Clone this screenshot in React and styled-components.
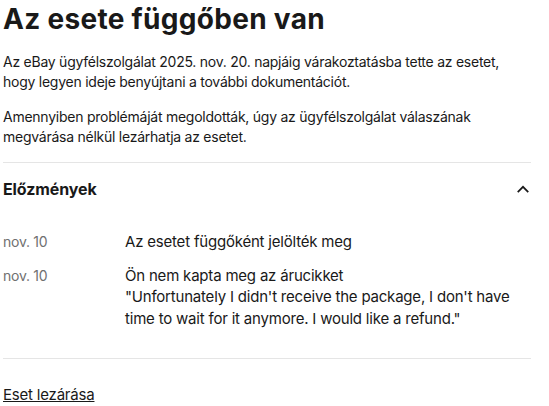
import React from "react";
import styled, { createGlobalStyle } from "styled-components";

const Global = createGlobalStyle`
  html, body { margin: 0; padding: 0; background: #fff; }
  body { font-family: Inter, "Liberation Sans", Arial, sans-serif; color: #191919; }
`;

const Page = styled.div`
  width: 528px;
  padding: 0 0 0 3px;
  box-sizing: content-box;
`;

const Title = styled.h1`
  margin: 0;
  padding-top: 2px;
  font-size: 28px;
  line-height: 34px;
  font-weight: 700;
  letter-spacing: 0.3px;
  color: #191919;
`;

const Para = styled.p`
  margin: ${(p) => p.$top}px 0 0;
  font-size: 14px;
  line-height: 20px;
  letter-spacing: -0.25px;
`;

const Divider = styled.hr`
  margin: ${(p) => p.$top}px 0 0;
  border: 0;
  border-top: 1px solid #e5e5e5;
  height: 0;
`;

const Header = styled.div`
  display: flex;
  align-items: center;
  justify-content: space-between;
  height: 52px;
`;

const HeaderTitle = styled.h2`
  margin: 0;
  font-size: 16px;
  font-weight: 700;
  letter-spacing: -0.1px;
`;

const Chevron = styled.svg`
  width: 14px;
  height: 14px;
  margin-right: 1px;
`;

const Rows = styled.div`
  display: flex;
  flex-direction: column;
  gap: 12px;
  padding-top: 16px;
`;

const Row = styled.div`
  display: grid;
  grid-template-columns: 122px 1fr;
  align-items: baseline;
`;

const Date = styled.div`
  color: #707070;
  font-size: 14px;
  line-height: 21px;
  letter-spacing: -0.25px;
`;

const Text = styled.div`
  color: #191919;
  font-size: 15px;
  line-height: 21.5px;
  letter-spacing: -0.2px;
`;

const Link = styled.a`
  display: inline-block;
  margin-top: 25px;
  font-size: 15px;
  line-height: 21px;
  letter-spacing: -0.2px;
  color: #191919;
  text-decoration: underline;
`;

export default function App() {
  return (
    <>
      <Global />
      <Page>
        <Title>Az esete függőben van</Title>
        <Para $top={16}>
          Az eBay ügyfélszolgálat 2025. nov. 20. napjáig várakoztatásba tette az esetet,
          hogy legyen ideje benyújtani a további dokumentációt.
        </Para>
        <Para $top={15}>
          Amennyiben problémáját megoldották, úgy az ügyfélszolgálat válaszának
          megvárása nélkül lezárhatja az esetet.
        </Para>
        <Divider $top={15} />
        <Header>
          <HeaderTitle>Előzmények</HeaderTitle>
          <Chevron viewBox="0 0 16 16" fill="none">
            <path d="M2 11.5 L8 5.5 L14 11.5" stroke="#191919" strokeWidth="2" />
          </Chevron>
        </Header>
        <Rows>
          <Row>
            <Date>nov. 10</Date>
            <Text>Az esetet függőként jelölték meg</Text>
          </Row>
          <Row>
            <Date>nov. 10</Date>
            <Text>
              Ön nem kapta meg az árucikket
              <br />
              "Unfortunately I didn't receive the package, I don't have time to wait for it anymore. I would like a refund."
            </Text>
          </Row>
        </Rows>
        <Divider $top={29} />
        <Link href="#">Eset lezárása</Link>
      </Page>
    </>
  );
}
